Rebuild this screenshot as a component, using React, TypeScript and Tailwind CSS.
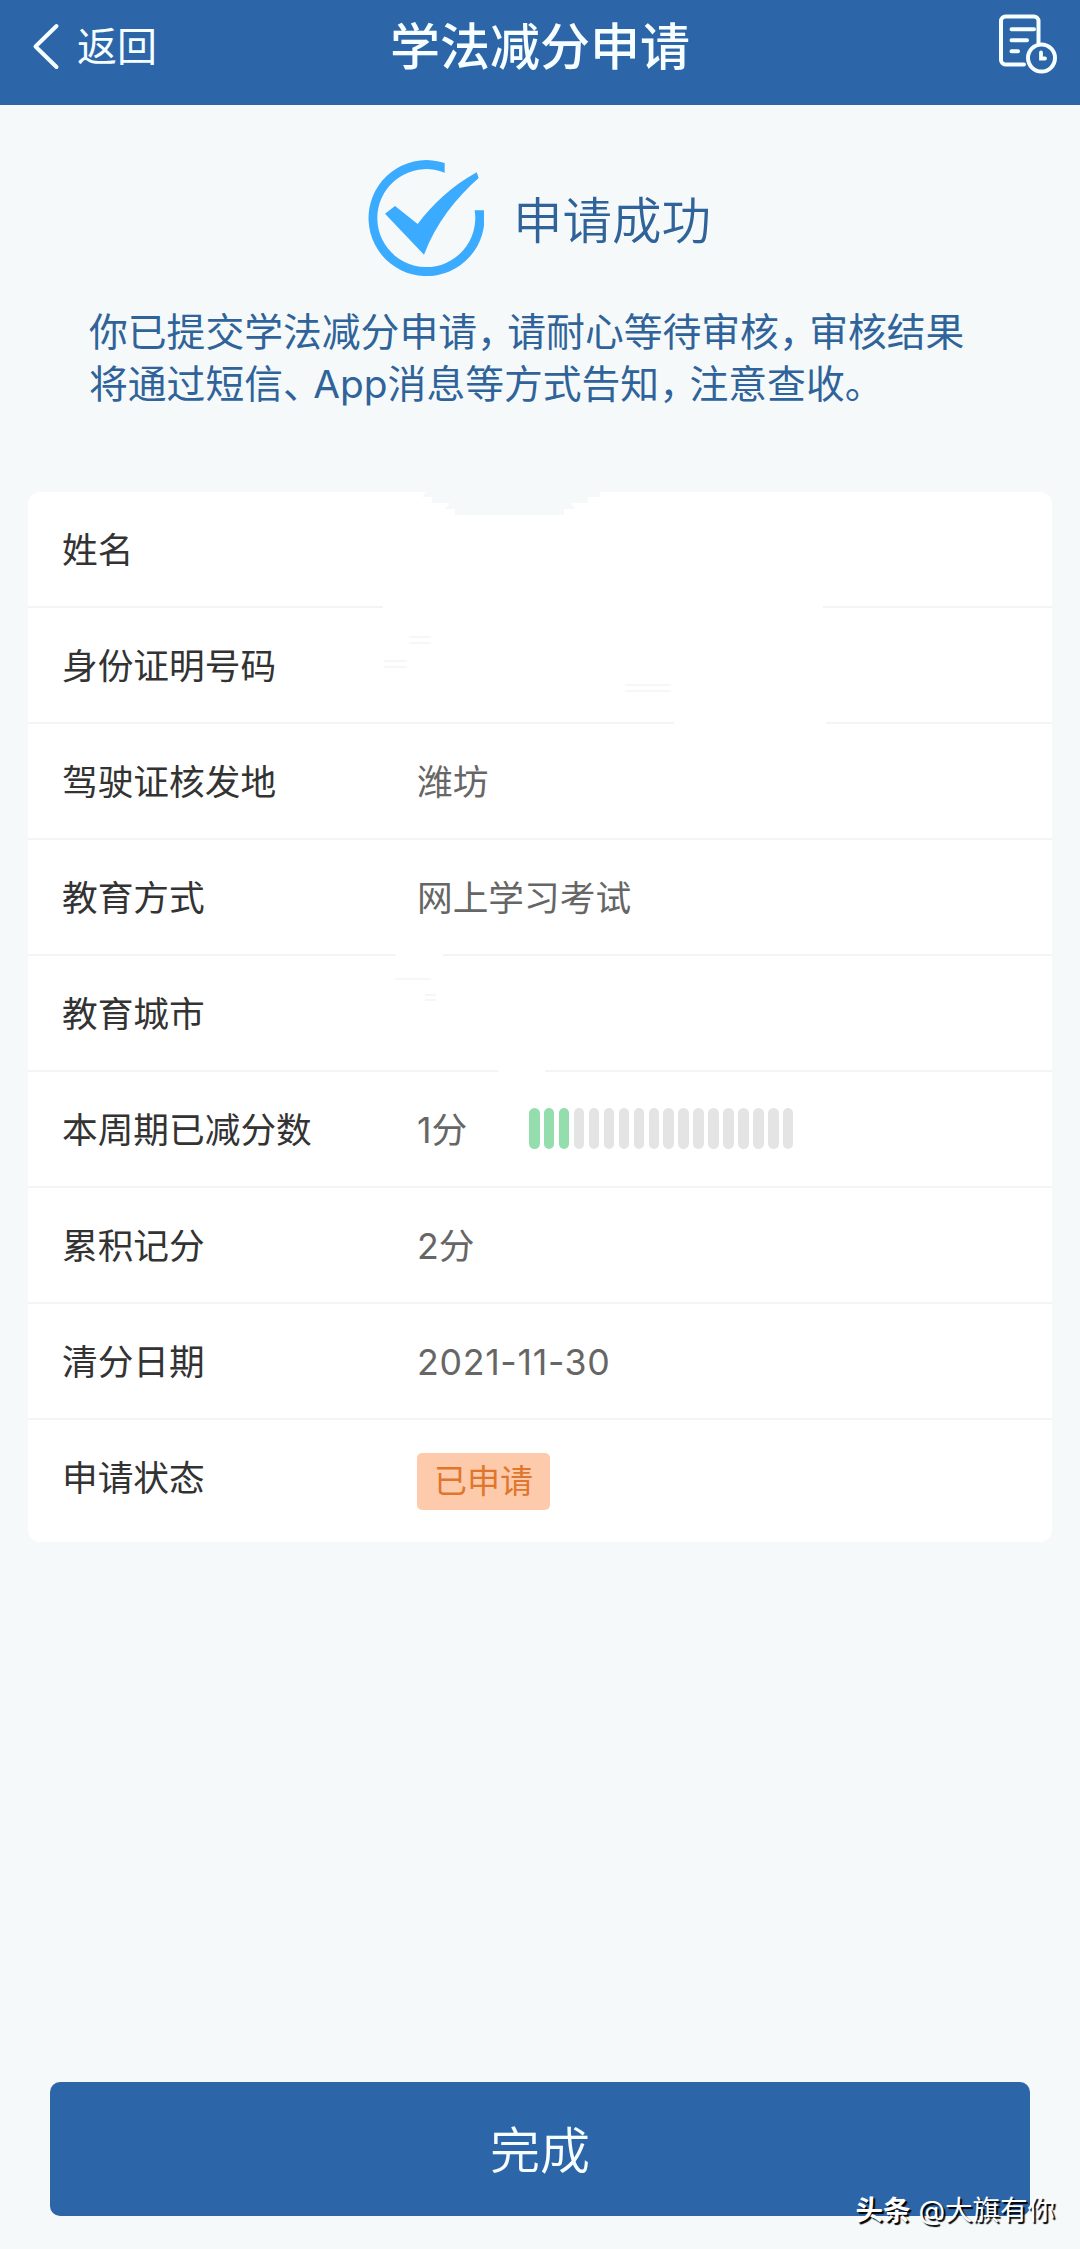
import type { ReactNode } from 'react'

type Row = {
  label: string
  value?: ReactNode
}

const rows: Row[] = [
  { label: '姓名' },
  { label: '身份证明号码' },
  { label: '驾驶证核发地', value: '潍坊' },
  { label: '教育方式', value: '网上学习考试' },
  { label: '教育城市' },
  { label: '本周期已减分数', value: <Score /> },
  { label: '累积记分', value: '2分' },
  { label: '清分日期', value: <span className="tracking-[0.700px]">2021-11-30</span> },
]

function BackIcon() {
  return (
    <svg className="h-[50px] w-[28px]" viewBox="0 0 28 50" fill="none" stroke="currentColor" strokeWidth="4">
      <path d="M24.500 5 3.500 25.500 24.500 46" strokeLinecap="round" strokeLinejoin="round" />
    </svg>
  )
}

function RecordIcon() {
  return (
    <svg className="h-[66px] w-[62px]" viewBox="0 0 62 66" fill="none" stroke="currentColor" strokeWidth="4" strokeLinecap="round">
      <path d="M28 54.500H9.500a4.500 4.500 0 0 1-4.500-4.500V11a4.500 4.500 0 0 1 4.500-4.500H38a4.500 4.500 0 0 1 4.500 4.500V33" />
      <path d="M15.500 19.300H38M15.500 30.300H31M15.500 41.300H22" />
      <circle cx="45.500" cy="48" r="13.500" />
      <path d="M45 42.500V48.500H49" strokeWidth="3.800" />
    </svg>
  )
}

function SuccessIcon() {
  return (
    <svg className="h-[116px] w-[116px]" viewBox="84 60 348 348" fill="#3aabff">
      <path d="M314 69A174 174 0 1 0 432 211H404A147 147 0 1 1 314 98Z" />
      <path d="M135 221 165 198 233 252C280 192 330 142 410 97L416 114C350 172 287 250 252 344Z" />
    </svg>
  )
}

// Full-width punctuation set a little tighter than its own em box
function Mark({ children }: { children: string }) {
  return <span className="tracking-[-8.500px]">{children}</span>
}

function Score() {
  return (
    <div className="flex items-center">
      <span className="w-[112px] pt-1">1分</span>
      <div className="flex gap-[4.450px]">
        {Array.from({ length: 18 }, (_, i) => (
          <span
            key={i}
            className={`h-[41px] w-[10.500px] rounded-full ${i < 3 ? 'bg-[#93deac]' : 'bg-[#e4e4e4]'}`}
          />
        ))}
      </div>
    </div>
  )
}

// Wiped areas over the private fields
function Redaction() {
  return (
    <svg className="pointer-events-none absolute top-0 left-0" width="1024" height="600" viewBox="28 492 1024 600">
      <path
        d="M420 491H600V497H588V503H570L576 509H564V515H455V509H444L450 503H432V497H422L427 491Z"
        fill="#f5f9fa"
      />
      <path d="M383 605H823V609H383ZM674 721H826V725H674ZM396 953H443V957H396ZM498 1069H545V1073H498Z" fill="#fff" />
      <path
        d="M409 637H431M409 643H431M384 661H407M384 667H407M625 685H671M625 691H671M395 979H431M425 995H436M425 1000H436"
        stroke="#f6f6f6"
        strokeWidth="2"
      />
    </svg>
  )
}

export default function App() {
  return (
    <div className="relative flex h-[2249px] w-[1080px] flex-col overflow-hidden bg-[#f5f9fa] font-['Inter','Noto_Sans_CJK_SC',sans-serif]">
      <header className="grid h-[105px] shrink-0 grid-cols-3 items-start bg-[#2c66a9] text-[#f6feff]">
        <button type="button" className="flex items-center pt-5 pl-[32px] text-[40px] leading-[50px]">
          <BackIcon />
          <span className="mt-0.5 ml-[17px]">返回</span>
        </button>
        <h1 className="pt-[17px] text-center text-[50px] leading-[60px] font-medium whitespace-nowrap">学法减分申请</h1>
        <button type="button" aria-label="申请记录" className="mt-[10px] mr-[22px] justify-self-end">
          <RecordIcon />
        </button>
      </header>

      <section className="shrink-0 pt-[55px]">
        <div className="flex items-center pl-[368px] text-[#2f6399]">
          <SuccessIcon />
          <h2 className="mt-[5px] ml-[29px] text-[49.500px] leading-[60px] font-[350]">申请成功</h2>
        </div>
        <p className="mt-[30px] h-[104px] pl-[89px] text-[38.800px] leading-[52px] whitespace-nowrap text-[#2f6399]">
          你已提交学法减分申请<Mark>，</Mark>请耐心等待审核<Mark>，</Mark>审核结果
          <br />
          将通过短信<Mark>、</Mark>App消息等方式告知<Mark>，</Mark>注意查收。
        </p>
      </section>

      <section className="relative mx-7 mt-[82px] h-[1050px] shrink-0 overflow-hidden rounded-[12px] bg-white text-[35.700px] text-[#333]">
        {rows.map((row) => (
          <div key={row.label} className="flex h-[116px] items-center border-b-2 border-[#f3f4f5] pl-[34px]">
            <span className="w-[355px] pt-1">{row.label}</span>
            <div className={row.label === '本周期已减分数' ? 'text-[#666]' : 'pt-1 text-[#666]'}>{row.value}</div>
          </div>
        ))}
        <div className="flex h-[122px] items-center pl-[34px]">
          <span className="w-[355px] pb-[5px]">申请状态</span>
          <span className="flex h-[57px] w-[133px] items-center justify-center rounded-[5px] bg-[#fdcbab] pt-0.5 text-[33px] text-[#e0762d]">
            已申请
          </span>
        </div>
        <Redaction />
      </section>

      <button
        type="button"
        className="mx-[50px] mt-auto mb-[33px] h-[134px] shrink-0 rounded-[10px] bg-[#2c66a9] pt-[5px] text-[50px] font-[350] text-[#f6feff]"
      >
        完成
      </button>

      <div className="absolute right-[25px] bottom-[19px] flex items-center gap-[8px] text-[27.500px] leading-[40px] text-white [text-shadow:2px_2px_1px_#000]">
        <span className="text-[27.500px] font-bold">头条</span>
        <span>@大旗有你</span>
      </div>
    </div>
  )
}
